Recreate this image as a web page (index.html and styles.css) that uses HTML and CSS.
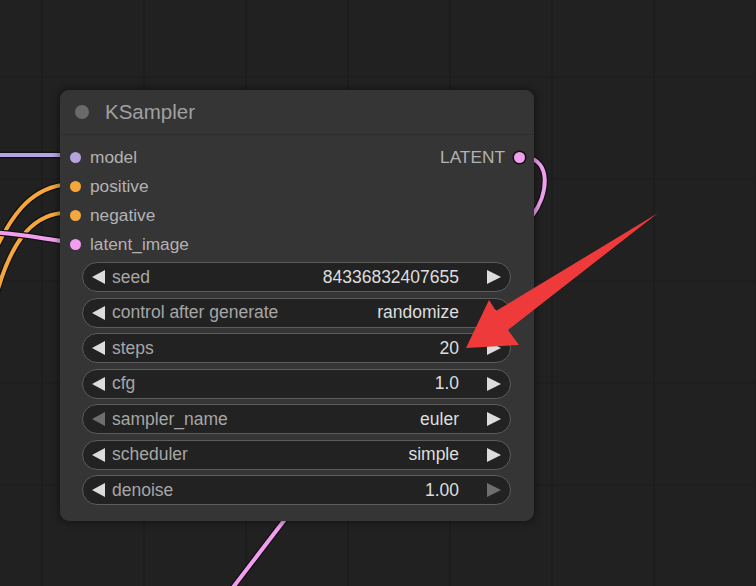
FILE: index.html
```html
<!DOCTYPE html>
<html>
<head>
<meta charset="utf-8">
<link rel="stylesheet" href="styles.css">
</head>
<body>
<div class="canvas">
  <svg class="wires" width="756" height="586" viewBox="0 0 756 586">
    <g fill="none" stroke-linecap="round">
      <path d="M-10 155 L62 155" stroke="#111" stroke-width="6.5"/>
      <path d="M-10 155 L62 155" stroke="#b7a3e0" stroke-width="4"/>
      <path d="M-10 262 C10 215 30 190 62 185" stroke="#111" stroke-width="6.5"/>
      <path d="M-10 262 C10 215 30 190 62 185" stroke="#f5a73b" stroke-width="4"/>
      <path d="M-4 296 C10 245 30 216 62 213" stroke="#111" stroke-width="6.5"/>
      <path d="M-4 296 C10 245 30 216 62 213" stroke="#f5a73b" stroke-width="4"/>
      <path d="M-10 232 C20 234 40 238 62 241" stroke="#111" stroke-width="6.5"/>
      <path d="M-10 232 C20 234 40 238 62 241" stroke="#f29ef0" stroke-width="4"/>
      <path d="M526 157 C552 161 548 195 532 216" stroke="#111" stroke-width="6.5"/>
      <path d="M526 157 C552 161 548 195 532 216" stroke="#f29ef0" stroke-width="4"/>
      <path d="M231 590 L286 518" stroke="#111" stroke-width="6.5"/>
      <path d="M231 590 L286 518" stroke="#f29ef0" stroke-width="4"/>
    </g>
  </svg>

  <div class="node">
    <div class="node-title">
      <span class="title-dot"></span>
      <span class="title-text">KSampler</span>
    </div>
    <div class="node-body">
      <div class="slots">
        <div class="slot-row">
          <div class="slot"><span class="dot dot-model"></span>model</div>
          <div class="slot out">LATENT<span class="dot dot-latent out-dot"></span></div>
        </div>
        <div class="slot-row"><div class="slot"><span class="dot dot-cond"></span>positive</div></div>
        <div class="slot-row"><div class="slot"><span class="dot dot-cond"></span>negative</div></div>
        <div class="slot-row"><div class="slot"><span class="dot dot-latent"></span>latent_image</div></div>
      </div>
      <div class="widgets">
        <div class="widget"><span class="arr left"></span><span class="w-label">seed</span><span class="w-value">84336832407655</span><span class="arr right"></span></div>
        <div class="widget"><span class="arr left"></span><span class="w-label">control after generate</span><span class="w-value">randomize</span><span class="arr right"></span></div>
        <div class="widget"><span class="arr left"></span><span class="w-label">steps</span><span class="w-value">20</span><span class="arr right"></span></div>
        <div class="widget"><span class="arr left"></span><span class="w-label">cfg</span><span class="w-value">1.0</span><span class="arr right"></span></div>
        <div class="widget"><span class="arr left dim"></span><span class="w-label">sampler_name</span><span class="w-value">euler</span><span class="arr right"></span></div>
        <div class="widget"><span class="arr left"></span><span class="w-label">scheduler</span><span class="w-value">simple</span><span class="arr right"></span></div>
        <div class="widget"><span class="arr left"></span><span class="w-label">denoise</span><span class="w-value">1.00</span><span class="arr right dim"></span></div>
      </div>
    </div>
  </div>

  <svg class="pointer" width="756" height="586" viewBox="0 0 756 586">
    <polygon points="658,213 508,330 519,345 466,348 489,300 496,311" fill="#ee3a3a"/>
  </svg>
</div>
</body>
</html>
```

FILE: styles.css
```css
html, body {
  margin: 0;
  padding: 0;
  background: #1f1f1f;
}

.canvas {
  position: relative;
  width: 756px;
  height: 586px;
  overflow: hidden;
  background-color: #212121;
  background-image:
    repeating-linear-gradient(90deg, transparent 0 41px, #1d1d1d 41px 43px, transparent 43px 102px),
    repeating-linear-gradient(0deg, transparent 0 100px, #1e1e1e 100px 102px);
  font-family: "Liberation Sans", Arial, sans-serif;
}

.wires, .pointer {
  position: absolute;
  left: 0;
  top: 0;
}

.pointer {
  z-index: 5;
}

.node {
  position: absolute;
  left: 60px;
  top: 90px;
  width: 474px;
  height: 431px;
  background: #353535;
  border-radius: 9px;
  box-shadow: 0 0 6px 2px rgba(0, 0, 0, 0.35);
  z-index: 2;
  display: flex;
  flex-direction: column;
}

.node-title {
  height: 44px;
  display: flex;
  align-items: center;
  border-bottom: 1px solid #2e2e2e;
  background: #353535;
  border-radius: 9px 9px 0 0;
}

.title-dot {
  width: 14px;
  height: 14px;
  border-radius: 50%;
  background: #6a6a6a;
  margin-left: 15px;
}

.title-text {
  margin-left: 16px;
  font-size: 20.5px;
  color: #a0a0a0;
}

.node-body {
  display: flex;
  flex-direction: column;
  padding-top: 8px;
}

.slots {
  display: flex;
  flex-direction: column;
}

.slot-row {
  height: 29px;
  display: flex;
  align-items: center;
  justify-content: space-between;
}

.slot {
  display: flex;
  align-items: center;
  font-size: 17.3px;
  color: #b2b2b2;
}

.slot .dot {
  width: 11px;
  height: 11px;
  border-radius: 50%;
  margin-left: 10px;
  margin-right: 9px;
}

.slot.out .dot {
  margin-left: 9px;
  margin-right: 9px;
  width: 11px;
  height: 11px;
  box-shadow: 0 0 0 1.5px #111;
}

.dot-model { background: #b7a3e0; }
.dot-cond { background: #f5a73b; }
.dot-latent { background: #f29ef0; }

.widgets {
  display: flex;
  flex-direction: column;
  gap: 5.5px;
  padding: 3px 23px 0 22px;
}

.widget {
  height: 28px;
  border: 1px solid #5c5c5c;
  border-radius: 15px;
  background: #222222;
  display: flex;
  align-items: center;
  font-size: 17.5px;
}

.arr {
  width: 0;
  height: 0;
  border-top: 7px solid transparent;
  border-bottom: 7px solid transparent;
}

.arr.left {
  border-right: 13px solid #dcdcdc;
  margin-left: 9px;
  margin-right: 7px;
}

.arr.right {
  border-left: 14px solid #dcdcdc;
  margin-left: 28px;
  margin-right: 9px;
}

.arr.left.dim { border-right-color: #6e6e6e; }
.arr.right.dim { border-left-color: #6e6e6e; }

.w-label {
  color: #a6a6a6;
  flex: 1;
}

.w-value {
  color: #dedede;
}
```
